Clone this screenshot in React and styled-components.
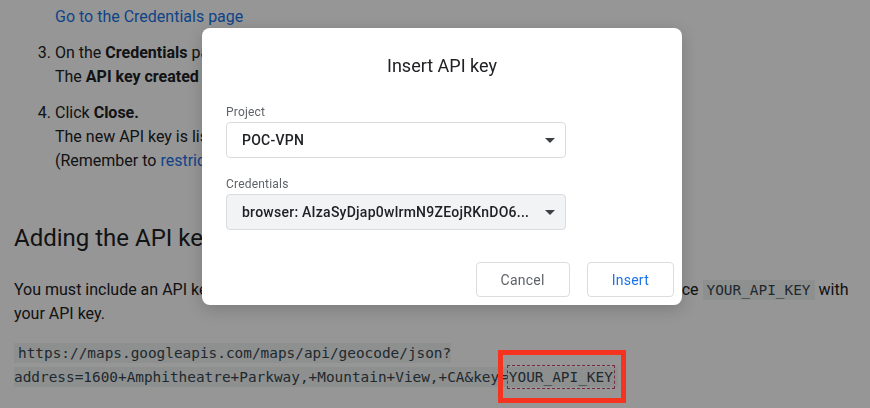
import React from 'react';
import styled, { createGlobalStyle } from 'styled-components';

const Global = createGlobalStyle`
  html, body { margin: 0; padding: 0; background: #fff; overflow: hidden; }
  body {
    font-family: Roboto, "Noto Sans", Arial, sans-serif;
    color: #202124;
    -webkit-font-smoothing: antialiased;
  }
  #root { width: 870px; height: 408px; position: relative; overflow: hidden; }
`;

const Page = styled.main`
  margin-top: -35px;
  padding: 0 8px 0 14px;
  font-size: 16px;
  line-height: 24px;
`;

const Steps = styled.ol`
  margin: 0;
  padding-left: 41px;
`;

const Step = styled.li`
  & + & { margin-top: 12px; }
`;

const StepLink = styled.p`
  margin: 16px 0 0;
`;

const Link = styled.a`
  color: #1a73e8;
  text-decoration: none;
`;

const Heading = styled.h2`
  margin: 49px 0 24px;
  font-size: 24px;
  line-height: 32px;
  font-weight: 400;
  color: #202124;
`;

const Para = styled.p`
  margin: 0;
`;

const CodeBlock = styled.p`
  margin: 15px 0 0;
  line-height: 24px;
`;

const Code = styled.code`
  font-family: "DejaVu Sans Mono", "Liberation Mono", monospace;
  font-size: 14.4px;
  color: #37474f;
  background: #f1f3f4;
  padding: 2px 4px;
  -webkit-box-decoration-break: slice;
  box-decoration-break: slice;
`;

const Var = styled.var`
  font-style: normal;
  position: relative;
  padding: 3px 1px;
  outline: 1px dashed #c8486a;

  &::after {
    content: "";
    position: absolute;
    top: -16px;
    bottom: -15px;
    left: -10px;
    right: -12px;
    border: 5px solid #f6331f;
    z-index: 20;
  }
`;

const Overlay = styled.div`
  position: fixed;
  inset: 0;
  background: rgba(0, 0, 0, 0.41);
  z-index: 10;
`;

const Dialog = styled.section`
  position: absolute;
  top: 28px;
  left: 202px;
  width: 480px;
  box-sizing: border-box;
  padding-top: 26px;
  background: #fff;
  border-radius: 8px;
  box-shadow: 0 4px 16px rgba(0, 0, 0, 0.18);
  z-index: 20;
`;

const Title = styled.h3`
  margin: 0;
  text-align: center;
  font-size: 18px;
  line-height: 24px;
  font-weight: 400;
  color: #202124;
`;

const Fields = styled.div`
  margin-top: 26px;
  padding: 0 24px;
  display: flex;
  flex-direction: column;
  gap: 18px;
`;

const Field = styled.div`
  display: flex;
  flex-direction: column;
  gap: 2px;
`;

const Label = styled.span`
  font-size: 12px;
  line-height: 16px;
  letter-spacing: 0.2px;
  color: #5f6368;
`;

const Select = styled.div`
  width: 340px;
  height: 36px;
  box-sizing: border-box;
  display: flex;
  align-items: center;
  justify-content: space-between;
  gap: 8px;
  padding: 0 10px 0 15px;
  border: 1px solid #dadce0;
  border-radius: 4px;
  background: ${(p) => (p.$muted ? '#f1f3f4' : '#fff')};
  font-size: 14px;
  font-weight: 500;
  letter-spacing: 0.25px;
  color: #202124;
`;

const SelectText = styled.span`
  white-space: nowrap;
  overflow: hidden;
`;

const Actions = styled.div`
  margin-top: 32px;
  padding: 0 8px 8px;
  display: flex;
  justify-content: flex-end;
  gap: 17px;
`;

const Button = styled.button`
  height: 35px;
  padding: 0 24px;
  border: 1px solid #dadce0;
  border-radius: 4px;
  background: #fff;
  font-family: Roboto, "Noto Sans", Arial, sans-serif;
  font-size: 14px;
  font-weight: 400;
  letter-spacing: 0.25px;
  color: ${(p) => (p.$primary ? '#1a73e8' : '#5f6368')};
`;

const Caret = () => (
  <svg width="10" height="5" viewBox="0 0 10 5" aria-hidden="true">
    <path d="M0 0h10L5 5z" fill="#3c4043" />
  </svg>
);

export default function App() {
  return (
    <>
      <Global />
      <Page>
        <Steps start={2}>
          <Step>
            In the Google Cloud console, open the project and go to Credentials:
            <StepLink>
              <Link href="#">Go to the Credentials page</Link>
            </StepLink>
          </Step>
          <Step>
            On the <b>Credentials</b> page, click <b>Create credentials &gt; API key</b>.
            <br />
            The <b>API key created</b> dialog displays your newly created API key.
          </Step>
          <Step>
            Click <b>Close.</b>
            <br />
            The new API key is listed on the <b>Credentials</b> page under <b>API keys</b>.
            <br />
            (Remember to <Link href="#">restrict the API key</Link> before using it in production.)
          </Step>
        </Steps>
        <Heading>Adding the API key to your request</Heading>
        <Para>
          You must include an API key with every Geocoding API request. In the following example, replace{' '}
          <Code>YOUR_API_KEY</Code> with
          <br />
          your API key.
        </Para>
        <CodeBlock>
          <Code>
            https://maps.googleapis.com/maps/api/geocode/json?
            <br />
            address=1600+Amphitheatre+Parkway,+Mountain+View,+CA&amp;key=<Var>YOUR_API_KEY</Var>
          </Code>
        </CodeBlock>
      </Page>
      <Overlay />
      <Dialog role="dialog" aria-label="Insert API key">
        <Title>Insert API key</Title>
        <Fields>
          <Field>
            <Label>Project</Label>
            <Select>
              <SelectText>POC-VPN</SelectText>
              <Caret />
            </Select>
          </Field>
          <Field>
            <Label>Credentials</Label>
            <Select $muted>
              <SelectText>browser: AIzaSyDjap0wlrmN9ZEojRKnDO6...</SelectText>
              <Caret />
            </Select>
          </Field>
        </Fields>
        <Actions>
          <Button>Cancel</Button>
          <Button $primary>Insert</Button>
        </Actions>
      </Dialog>
    </>
  );
}
